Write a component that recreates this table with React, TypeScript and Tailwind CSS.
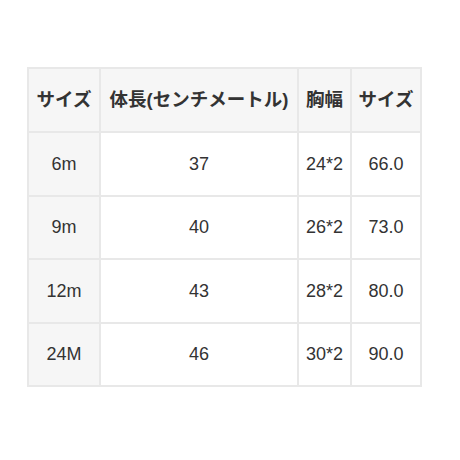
const rows = [
  ["6m", "37", "24*2", "66.0"],
  ["9m", "40", "26*2", "73.0"],
  ["12m", "43", "28*2", "80.0"],
  ["24M", "46", "30*2", "90.0"],
];

const headers = ["サイズ", "体長(センチメートル)", "胸幅", "サイズ"];

export default function App() {
  return (
    <div className="w-[460px] h-[460px] bg-white pt-[67px] pl-[27px] font-['Liberation_Sans','Noto_Sans_CJK_JP',sans-serif] text-[#333333]">
      <table className="border-collapse text-[18px] leading-none">
        <colgroup>
          <col className="w-[72px]" />
          <col className="w-[198px]" />
          <col className="w-[53px]" />
          <col className="w-[70px]" />
        </colgroup>
        <thead>
          <tr className="h-[64px] bg-[#f6f6f6]">
            {headers.map((h, i) => (
              <th
                key={i}
                className="border-2 border-[#e8e8e8] px-0 text-center text-[18.5px] font-bold"
              >
                {h}
              </th>
            ))}
          </tr>
        </thead>
        <tbody>
          {rows.map((r, i) => (
            <tr key={i} className="h-[63.5px]">
              {r.map((c, j) => (
                <td
                  key={j}
                  className={
                    "border-2 border-[#e8e8e8] text-center " +
                    (j === 0 ? "bg-[#f6f6f6]" : "bg-white")
                  }
                >
                  {c}
                </td>
              ))}
            </tr>
          ))}
        </tbody>
      </table>
    </div>
  );
}
